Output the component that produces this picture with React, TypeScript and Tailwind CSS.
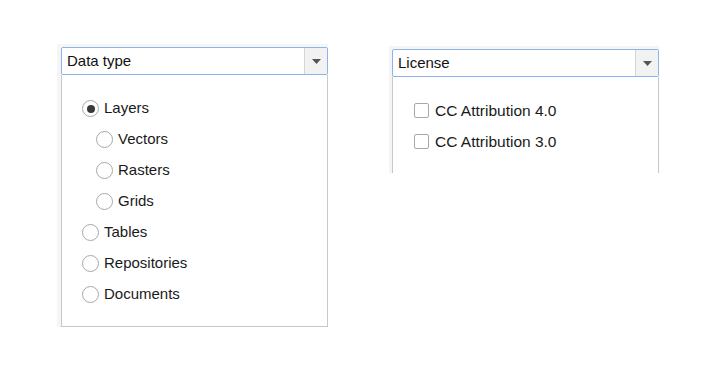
import React from "react";

const font = { fontFamily: '"Liberation Sans", Arial, sans-serif' };

function Arrow() {
  return (
    <svg width="9" height="5" viewBox="0 0 9 5">
      <path d="M0 0 L9 0 L4.5 5 Z" fill="#555" />
    </svg>
  );
}

function Radio({ checked, label, indent }: { checked?: boolean; label: string; indent?: boolean }) {
  return (
    <div className={`flex h-[31px] items-center ${indent ? "pl-[34px]" : "pl-[20px]"}`}>
      <span className="flex h-[17px] w-[17px] items-center justify-center rounded-full border border-[#a8a8a8] bg-white">
        {checked && <span className="h-[8px] w-[8px] rounded-full bg-[#3a3a3a]" />}
      </span>
      <span className="ml-[5px] text-[15px] text-[#1a1a1a]">{label}</span>
    </div>
  );
}

function Check({ label }: { label: string }) {
  return (
    <div className="flex h-[31px] items-center pl-[21px]">
      <span className="h-[15px] w-[15px] rounded-[2px] border border-[#a8a8a8] bg-white" />
      <span className="ml-[6px] text-[15.5px] text-[#1a1a1a]">{label}</span>
    </div>
  );
}

function Select({ label }: { label: string }) {
  return (
    <div className="flex h-[28px] w-[267px] rounded-[2px] border border-[#8bb4ee] bg-white">
      <div className="flex flex-1 items-center pl-[5px] text-[15px] text-[#111]">{label}</div>
      <div className="flex w-[23px] items-center justify-center border-l border-[#d6d6d6] bg-[#f2f2f2]">
        <Arrow />
      </div>
    </div>
  );
}

export default function App() {
  return (
    <div className="relative h-[384px] w-[720px] bg-white" style={font}>
      <div className="absolute left-[57px] top-[44px] bg-[#f5f5f5] pl-[4px] pt-[3px]">
        <Select label="Data type" />
        <div className="h-[252px] w-[267px] border border-t-0 border-[#c8c8c8] bg-white pt-[18px]">
          <Radio checked label="Layers" />
          <Radio indent label="Vectors" />
          <Radio indent label="Rasters" />
          <Radio indent label="Grids" />
          <Radio label="Tables" />
          <Radio label="Repositories" />
          <Radio label="Documents" />
        </div>
      </div>
      <div className="absolute left-[389px] top-[46px] bg-[#f5f5f5] pl-[3px] pt-[3px]">
        <Select label="License" />
        <div className="h-[96px] w-[267px] border-x border-[#c8c8c8] bg-white pt-[18px]">
          <Check label="CC Attribution 4.0" />
          <Check label="CC Attribution 3.0" />
        </div>
      </div>
    </div>
  );
}
